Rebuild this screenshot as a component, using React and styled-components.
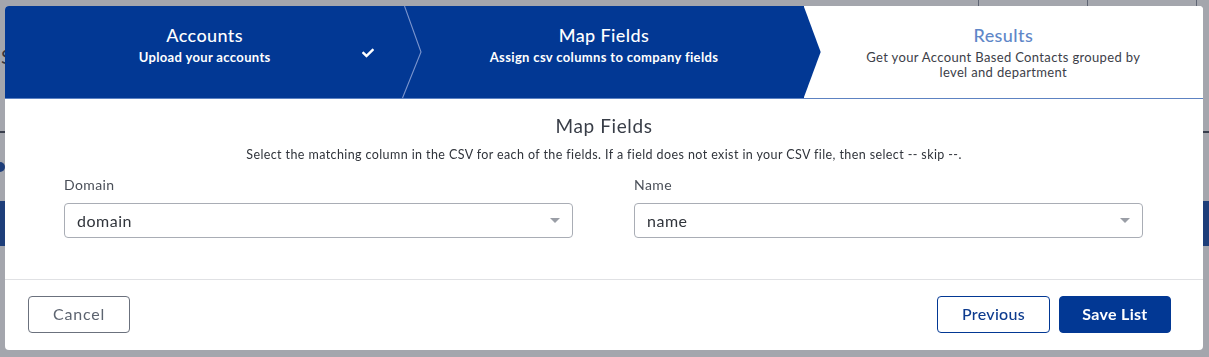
import React from "react";
import styled, { createGlobalStyle } from "styled-components";
import { FaCheck } from "react-icons/fa";

const BLUE = "#023894";
const FONT = `"Lato", "Open Sans", "Liberation Sans", sans-serif`;

const GlobalStyle = createGlobalStyle`
  html, body { margin: 0; padding: 0; height: 100%; overflow: hidden; }
  body { font-family: ${FONT}; background: #fff; }
  #root { height: 100%; }
  * { box-sizing: border-box; }
`;

/* ---------- background page (dimmed behind the modal) ---------- */
const Page = styled.div`
  height: 100%;
  display: flex;
  flex-direction: column;
  background: #fff;
`;
const PageTop = styled.div`
  height: 6px;
  display: flex;
  justify-content: flex-end;
`;
const TopCol = styled.div`
  width: ${(p) => p.$w}px;
  border-left: 1px solid #8c93a0;
`;
const PageHead = styled.div`
  height: 127px;
  border-bottom: 2px solid #4d5360;
  display: flex;
  align-items: flex-start;
  padding: 38px 0 0 1px;
  font-size: 20px;
  line-height: 24px;
  color: #444;
`;
const PageSpacer = styled.div`
  height: 68px;
  display: flex;
  align-items: center;
`;
const Dot = styled.span`
  width: 10px;
  height: 10px;
  border-radius: 50%;
  background: #2153aa;
  margin-left: -5px;
`;
const PageBar = styled.div`
  height: 45px;
  background: #2153aa;
`;

const Overlay = styled.div`
  position: fixed;
  inset: 0;
  background: rgba(28, 33, 50, 0.4);
  padding: 6px 6px 0 5px;
`;

/* ---------- modal ---------- */
const Modal = styled.div`
  width: 1198px;
  height: 344px;
  background: #fff;
  border-radius: 4px;
  overflow: hidden;
  display: flex;
  flex-direction: column;
`;

const Steps = styled.div`
  display: flex;
  height: 93px;
  border-bottom: 1px solid #5d82c2;
`;
const Step = styled.div`
  position: relative;
  flex: 1;
  display: flex;
  flex-direction: column;
  align-items: center;
  padding-top: 18px;
  background: ${(p) => (p.$done || p.$active ? BLUE : "#fff")};
  z-index: ${(p) => (p.$active ? 2 : 1)};
  ${(p) =>
    p.$active &&
    `
    &::after {
      content: "";
      position: absolute;
      top: 0;
      right: -17px;
      width: 17px;
      height: 92px;
      background: ${BLUE};
      clip-path: polygon(0 0, 100% 50%, 0 100%);
    }
  `}
`;
const StepTitle = styled.div`
  font-size: 18px;
  line-height: 22px;
  font-weight: 500;
  letter-spacing: 0.4px;
  color: ${(p) => (p.$light ? "#5f87c8" : "#fff")};
`;
const StepSub = styled.div`
  margin-top: 4px;
  font-size: 13px;
  line-height: 15px;
  letter-spacing: 0.35px;
  font-weight: ${(p) => (p.$light ? 400 : 700)};
  color: ${(p) => (p.$light ? "#3c4048" : "#fff")};
  text-align: center;
  max-width: 290px;
`;
const Check = styled.span`
  position: absolute;
  right: 30px;
  top: 41px;
  color: #fff;
  display: flex;
`;
const Divider = styled.svg`
  position: absolute;
  top: 0;
  left: 0;
  overflow: visible;
`;

const Body = styled.div`
  display: flex;
  flex-direction: column;
  align-items: center;
  padding: 16px 0 41px;
  border-bottom: 1px solid #e0e1e4;
`;
const Heading = styled.h2`
  margin: 0;
  font-size: 19px;
  line-height: 22px;
  font-weight: 400;
  letter-spacing: 0.6px;
  color: #383d47;
`;
const Hint = styled.p`
  margin: 11px 0 0;
  font-size: 12.5px;
  line-height: 14px;
  letter-spacing: 0.4px;
  color: #30343b;
`;
const Fields = styled.div`
  align-self: stretch;
  display: grid;
  grid-template-columns: 509px 509px;
  column-gap: 61px;
  padding: 0 60px 0 59px;
  margin-top: 15px;
`;
const Field = styled.label`
  display: flex;
  flex-direction: column;
`;
const Label = styled.span`
  font-size: 14px;
  line-height: 16px;
  letter-spacing: 0.4px;
  color: #4a4f58;
`;
const Select = styled.div`
  margin-top: 10px;
  height: 35px;
  border: 1px solid #a9adb5;
  border-radius: 4px;
  display: flex;
  align-items: center;
  justify-content: space-between;
  padding: 0 12px 1px 12px;
  font-size: 16px;
  letter-spacing: 0.5px;
  color: #30343b;
`;
const Caret = styled.span`
  width: 0;
  height: 0;
  border-left: 5px solid transparent;
  border-right: 5px solid transparent;
  border-top: 5px solid #9a9ea6;
`;

const Footer = styled.div`
  display: flex;
  align-items: center;
  justify-content: space-between;
  padding: 16px 32px 17px 23px;
`;
const Group = styled.div`
  display: flex;
  gap: 9px;
`;
const Button = styled.button`
  height: 37px;
  width: ${(p) => p.$w}px;
  border-radius: 4px;
  font-family: ${FONT};
  font-size: 16px;
  letter-spacing: ${(p) => (p.$variant === "ghost" ? "0.8px" : "0.3px")};
  padding: 0 0 2px;
  cursor: pointer;
  border: 1px solid ${(p) => (p.$variant === "ghost" ? "#6b717d" : BLUE)};
  color: ${(p) =>
    p.$variant === "ghost" ? "#5d6470" : p.$variant === "primary" ? "#fff" : "#0d3b8e"};
  background: ${(p) => (p.$variant === "primary" ? BLUE : "#fff")};
  font-weight: ${(p) => (p.$variant === "primary" ? 700 : p.$variant === "outline" ? 500 : 400)};
`;

export default function App() {
  return (
    <>
      <GlobalStyle />
      <Page>
        <PageTop>
          <TopCol $w={109} />
          <TopCol $w={109} />
          <TopCol $w={13} />
        </PageTop>
        <PageHead>Saved Lists</PageHead>
        <PageSpacer>
          <Dot />
        </PageSpacer>
        <PageBar />
      </Page>
      <Overlay>
        <Modal>
          <Steps>
            <Step $done>
              <StepTitle>Accounts</StepTitle>
              <StepSub>Upload your accounts</StepSub>
              <Check>
                <FaCheck size={12} />
              </Check>
            </Step>
            <Step $active>
              <Divider width="18" height="92" viewBox="0 0 18 92">
                <polyline
                  points="0.5,0 17,46 -1.5,92"
                  fill="none"
                  stroke="#7a94cd"
                  strokeWidth="1.1"
                />
              </Divider>
              <StepTitle>Map Fields</StepTitle>
              <StepSub>Assign csv columns to company fields</StepSub>
            </Step>
            <Step>
              <StepTitle $light>Results</StepTitle>
              <StepSub $light>
                Get your Account Based Contacts grouped by level and department
              </StepSub>
            </Step>
          </Steps>
          <Body>
            <Heading>Map Fields</Heading>
            <Hint>
              Select the matching column in the CSV for each of the fields. If a field does not
              exist in your CSV file, then select -- skip --.
            </Hint>
            <Fields>
              <Field>
                <Label>Domain</Label>
                <Select>
                  domain
                  <Caret />
                </Select>
              </Field>
              <Field>
                <Label>Name</Label>
                <Select>
                  name
                  <Caret />
                </Select>
              </Field>
            </Fields>
          </Body>
          <Footer>
            <Button $variant="ghost" $w={102}>Cancel</Button>
            <Group>
              <Button $variant="outline" $w={113}>Previous</Button>
              <Button $variant="primary" $w={112}>Save List</Button>
            </Group>
          </Footer>
        </Modal>
      </Overlay>
    </>
  );
}
